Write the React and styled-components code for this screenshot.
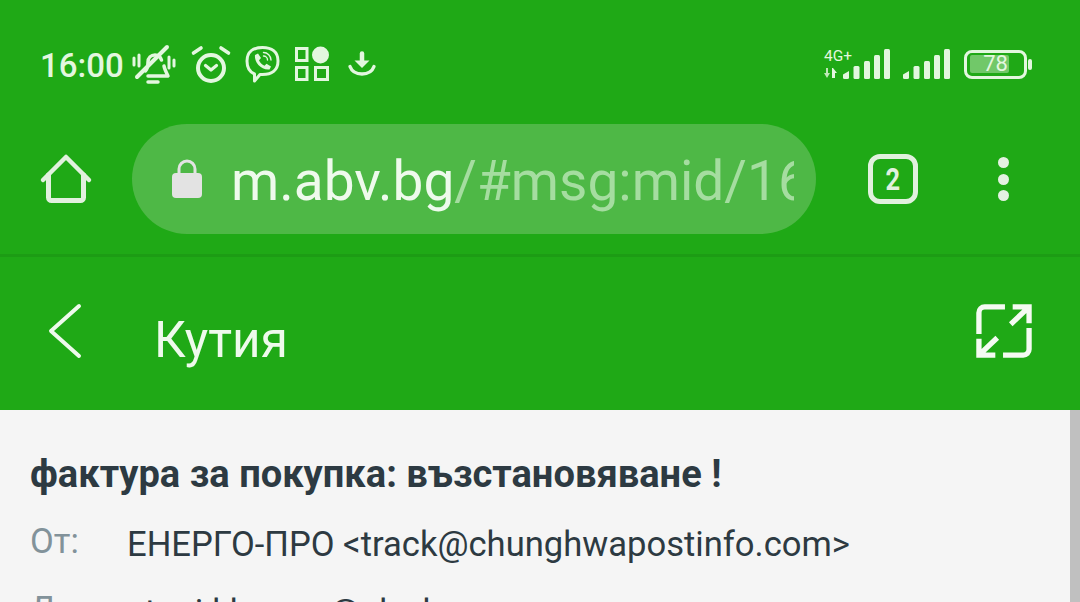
import React from "react";
import styled, { createGlobalStyle } from "styled-components";

const Global = createGlobalStyle`
  html, body { margin: 0; padding: 0; height: 602px; overflow: hidden; background: #f5f5f5; }
  * { box-sizing: border-box; }
`;
const Page = styled.div`
  width: 1080px; height: 602px; overflow: hidden; display: flex; flex-direction: column;
  font-family: Roboto, "Liberation Sans", sans-serif;
`;
const StatusBar = styled.div`
  height: 124px; flex: none; background: #1fa916;
  padding: 0 48px 0 40px; display: flex; align-items: flex-start; justify-content: space-between; color: #e6f8e2;
`;
const StatusGroup = styled.div`
  display: flex; align-items: center; height: 128px;
`;
const Clock = styled.span`
  font-size: 33px; font-weight: 500; line-height: 130px; margin: 3px 7px 0 0; color: #e3f7df;
`;
const IconSvg = styled.svg`
  display: block; flex: none; margin-right: ${p => p.$mr || 0}px; overflow: visible;
`;
const ToolBar = styled.div`
  height: 133px; flex: none; background: #1fa916; border-bottom: 3px solid #1c9c14;
  display: flex; align-items: flex-start; padding: 0 51px 0 41px;
`;
const HomeSlot = styled.div`
  width: 91px; height: 110px; flex: none; display: flex; align-items: center;
`;
const UrlPill = styled.div`
  width: 684px; height: 110px; border-radius: 55px; background: #4eb846; flex: none;
  display: flex; align-items: center; padding: 0 22px 0 40px; gap: 29px;
`;
const UrlText = styled.div`
  font-size: 55px; line-height: 64px; padding-top: 3px; white-space: nowrap; overflow: hidden; flex: 1; color: #a5dda0; min-width: 0;
`;
const UrlHost = styled.span`color: #eefaec;`;
const Tabs = styled.div`
  margin-left: 52px; width: 50px; height: 110px; flex: none; display: flex; align-items: center; justify-content: center;
`;
const TabBox = styled.div`
  width: 50px; height: 50px; border: 5px solid #e1f1de; border-radius: 12px; display: flex; align-items: center; justify-content: center;
`;
const TabCount = styled.span`
  color: #e1f1de; font: 700 31px/1 Roboto, sans-serif; transform: scaleX(.82);
`;
const Dots = styled.div`
  margin-left: 75px; width: 20px; height: 110px; flex: none; display: flex; flex-direction: column; gap: 5.5px; align-items: center; justify-content: center;
`;
const Dot = styled.i`
  display: block; width: 11px; height: 11px; border-radius: 50%; background: #e4f1e2;
`;
const Header = styled.div`
  height: 153px; flex: none; background: #1fa916; display: flex; align-items: center; padding: 0 47px 5px 48px;
`;
const Title = styled.div`
  font-size: 49.5px; line-height: 58px; color: #eefaec; margin-left: 72px; flex: 1; padding-top: 18px;
`;
const Content = styled.div`
  flex: 1; position: relative; padding: 41px 0 0 30px; background: #f5f5f5; color: #2d3a42; min-height: 0; overflow: hidden;
`;
const ScrollThumb = styled.div`
  position: absolute; right: 0; top: 0; bottom: 0; width: 10px; background: #c0c0c0;
`;
const Subject = styled.div`
  font-size: 38.1px; font-weight: 700; line-height: 46px; margin-bottom: 27px;
`;
const MetaRow = styled.div`
  display: flex; font-size: 34.6px; line-height: 40px; height: 68px; white-space: nowrap;
`;
const MetaLabel = styled.div`
  width: 97px; flex: none; color: #82929a; margin-top: -3px;
`;
const MetaValue = styled.div`color: #2d3a42;`;

const MutedBell = () => (
  <IconSvg width="46" height="40" viewBox="0 0 46 40" fill="none" stroke="#e3f7df" strokeWidth="3.5" $mr={14} strokeLinecap="round">
    <path d="M14.500 27c2.500-3 2.500-6 2.500-9 0-4 3-7 7-7 3 0 5.500 2 6.500 5M33 22c.5 3 2 6 4 10H17" strokeLinejoin="round" />
    <path d="M17 38h10" strokeWidth="3.5" />
    <path d="M6 33 36 3" strokeWidth="4" />
    <path d="M3 14v7M8 11v11M38 13v11M43 16v6" strokeWidth="3" />
  </IconSvg>
);
const Alarm = () => (
  <IconSvg width="40" height="38" viewBox="0 0 40 38" fill="none" stroke="#e3f7df" $mr={14} strokeLinecap="round">
    <circle cx="20" cy="23" r="13" strokeWidth="4" />
    <path d="M2.500 8 10 3M37.500 8 30 3" strokeWidth="3.6" />
    <path d="M14.500 20.500 20 25l5.500-4.500" strokeWidth="3.2" strokeLinejoin="round" />
  </IconSvg>
);
const Viber = () => (
  <IconSvg width="35" height="37" viewBox="0 0 34 37" fill="none" stroke="#e3f7df" $mr={15} strokeLinecap="round" strokeLinejoin="round">
    <path d="M17 1.500c9 0 15.500 4 15.500 13.500S26 28.500 17 28.500h-2.500L9 35v-7C4 26 1.500 21.500 1.500 15 1.500 5.500 8 1.500 17 1.500Z" strokeWidth="3" />
    <path d="M9.500 9l3-1.500 3 4.500-2 2.300c1 2.500 3 4.500 5.500 5.500l2-2 4.500 2.700-1.500 3c-8 1-15.500-7-14.500-14.500Z" fill="#e3f7df" stroke="none" />
    <path d="M18 6.500c4 0 7.500 3.500 7.500 7.500M18 10c2.200 0 4 1.800 4 4" strokeWidth="1.400" />
  </IconSvg>
);
const Grid = () => (
  <IconSvg width="34" height="36" viewBox="0 0 34 36" fill="none" stroke="#e3f7df" strokeWidth="3" $mr={19}>
    <rect x="1.500" y="2.500" width="10.500" height="12" />
    <rect x="1.500" y="21.500" width="10.500" height="12" />
    <rect x="20.500" y="21.500" width="12" height="12" />
    <circle cx="25.500" cy="9" r="8.500" fill="#e3f7df" stroke="none" />
  </IconSvg>
);
const Download = () => (
  <IconSvg width="28" height="24" viewBox="0 0 28 24" fill="none" stroke="#e3f7df" strokeLinecap="round">
    <path d="M14 1.500v9" strokeWidth="4.500" />
    <path d="M6.500 8.500h15L14 16Z" fill="#e3f7df" stroke="none" />
    <path d="M2 14.500c2 5.500 6 7.500 12 7.500s10-2 12-7.500" strokeWidth="3.400" />
  </IconSvg>
);
const Bars = ({ mr = 0 }) => (
  <IconSvg width="47" height="30" viewBox="0 0 47 30" $mr={mr} fill="#e3f7df">
    <path d="M0 25.500 6 22v6.500A1.500 1.500 0 0 1 4.500 30h-3A1.500 1.500 0 0 1 0 28.500Z" />
    <rect x="10.500" y="17" width="6" height="13" rx="1.500" />
    <rect x="21" y="12" width="6" height="18" rx="1.500" />
    <rect x="31" y="6" width="6" height="24" rx="1.500" />
    <rect x="41" y="0" width="6" height="30" rx="1.500" />
  </IconSvg>
);
const NetBadge = styled.div`
  width: 19px; height: 30px; position: relative; flex: none;
`;
const NetLabel = styled.span`
  position: absolute; left: 0; top: -1px; font-size: 15.5px; line-height: 16px; color: #e3f7df; white-space: nowrap;
`;
const NetArrows = styled.svg`
  position: absolute; left: 0; top: 19px;
`;
const Battery = styled.div`
  width: 63px; height: 29px; border: 3.5px solid #e3f7df; border-radius: 8px; position: relative; margin-left: 14px; flex: none;
  display: flex; align-items: center; justify-content: center;
`;
const BatteryFill = styled.div`
  position: absolute; left: 2.5px; top: 2.5px; bottom: 2.5px; width: 39px; background: #71c869; border-radius: 2px;
`;
const BatteryText = styled.span`
  position: relative; font-size: 22px; line-height: 22px; color: #e3f7df;
`;
const BatteryCap = styled.div`
  width: 4px; height: 11px; background: #e3f7df; border-radius: 2px; margin-left: 1px; flex: none;
`;

export default function App() {
  return (
    <Page>
      <Global />
      <StatusBar>
        <StatusGroup>
          <Clock>16:00</Clock>
          <MutedBell />
          <Alarm />
          <Viber />
          <Grid />
          <Download />
        </StatusGroup>
        <StatusGroup>
          <NetBadge>
            <NetLabel>4G+</NetLabel>
            <NetArrows width="14" height="11" viewBox="0 0 14 11" fill="#bfe8b8">
              <path d="M2 0h2v5h2L3 10 0 5h2Z" />
              <path d="M8 0h1l4 5h-2v5H8Z" fill="#e3f7df" />
            </NetArrows>
          </NetBadge>
          <Bars mr={13} />
          <Bars />
          <Battery>
            <BatteryFill />
            <BatteryText>78</BatteryText>
          </Battery>
          <BatteryCap />
        </StatusGroup>
      </StatusBar>
      <ToolBar>
        <HomeSlot>
          <IconSvg width="50" height="50" viewBox="0 0 50 50" fill="none" stroke="#e1f1de" strokeLinecap="round" strokeLinejoin="round">
            <path d="M2 26 25 3l23 23" strokeWidth="4.500" />
            <path d="M7.500 21v22.500a3 3 0 0 0 3 3h29a3 3 0 0 0 3-3V21" strokeWidth="5" />
          </IconSvg>
        </HomeSlot>
        <UrlPill>
          <IconSvg width="30" height="38" viewBox="0 0 30 38">
            <path d="M7 15V9a8 8 0 0 1 16 0v6" fill="none" stroke="#e3e3e3" strokeWidth="3" />
            <rect x="0" y="13" width="30" height="25" rx="4" fill="#e3e3e3" />
          </IconSvg>
          <UrlText><UrlHost>m.abv.bg</UrlHost>/#msg:mid/16</UrlText>
        </UrlPill>
        <Tabs><TabBox><TabCount>2</TabCount></TabBox></Tabs>
        <Dots><Dot /><Dot /><Dot /></Dots>
      </ToolBar>
      <Header>
        <IconSvg width="34" height="54" viewBox="0 0 34 54" fill="none" stroke="#eefaec" strokeWidth="4" strokeLinecap="round" strokeLinejoin="round">
          <path d="M31 2 3 27l28 25" />
        </IconSvg>
        <Title>Кутия</Title>
        <IconSvg width="58" height="54" viewBox="0 0 58 56" fill="none" stroke="#f4fbf2" strokeWidth="5.5">
          <path d="M30 3H9a6 6 0 0 0-6 6v22M28 53h21a6 6 0 0 0 6-6V25" />
          <path d="M38 3h17v17M55 3 36 21M3 36v17h17M3 53l19-18" />
        </IconSvg>
      </Header>
      <Content>
        <ScrollThumb />
        <Subject>фактура за покупка: възстановяване !</Subject>
        <MetaRow><MetaLabel>От:</MetaLabel><MetaValue>ЕНЕРГО-ПРО &lt;track@chunghwapostinfo.com&gt;</MetaValue></MetaRow>
        <MetaRow><MetaLabel>До:</MetaLabel><MetaValue>stoni.khorma@abv.bg</MetaValue></MetaRow>
      </Content>
    </Page>
  );
}
